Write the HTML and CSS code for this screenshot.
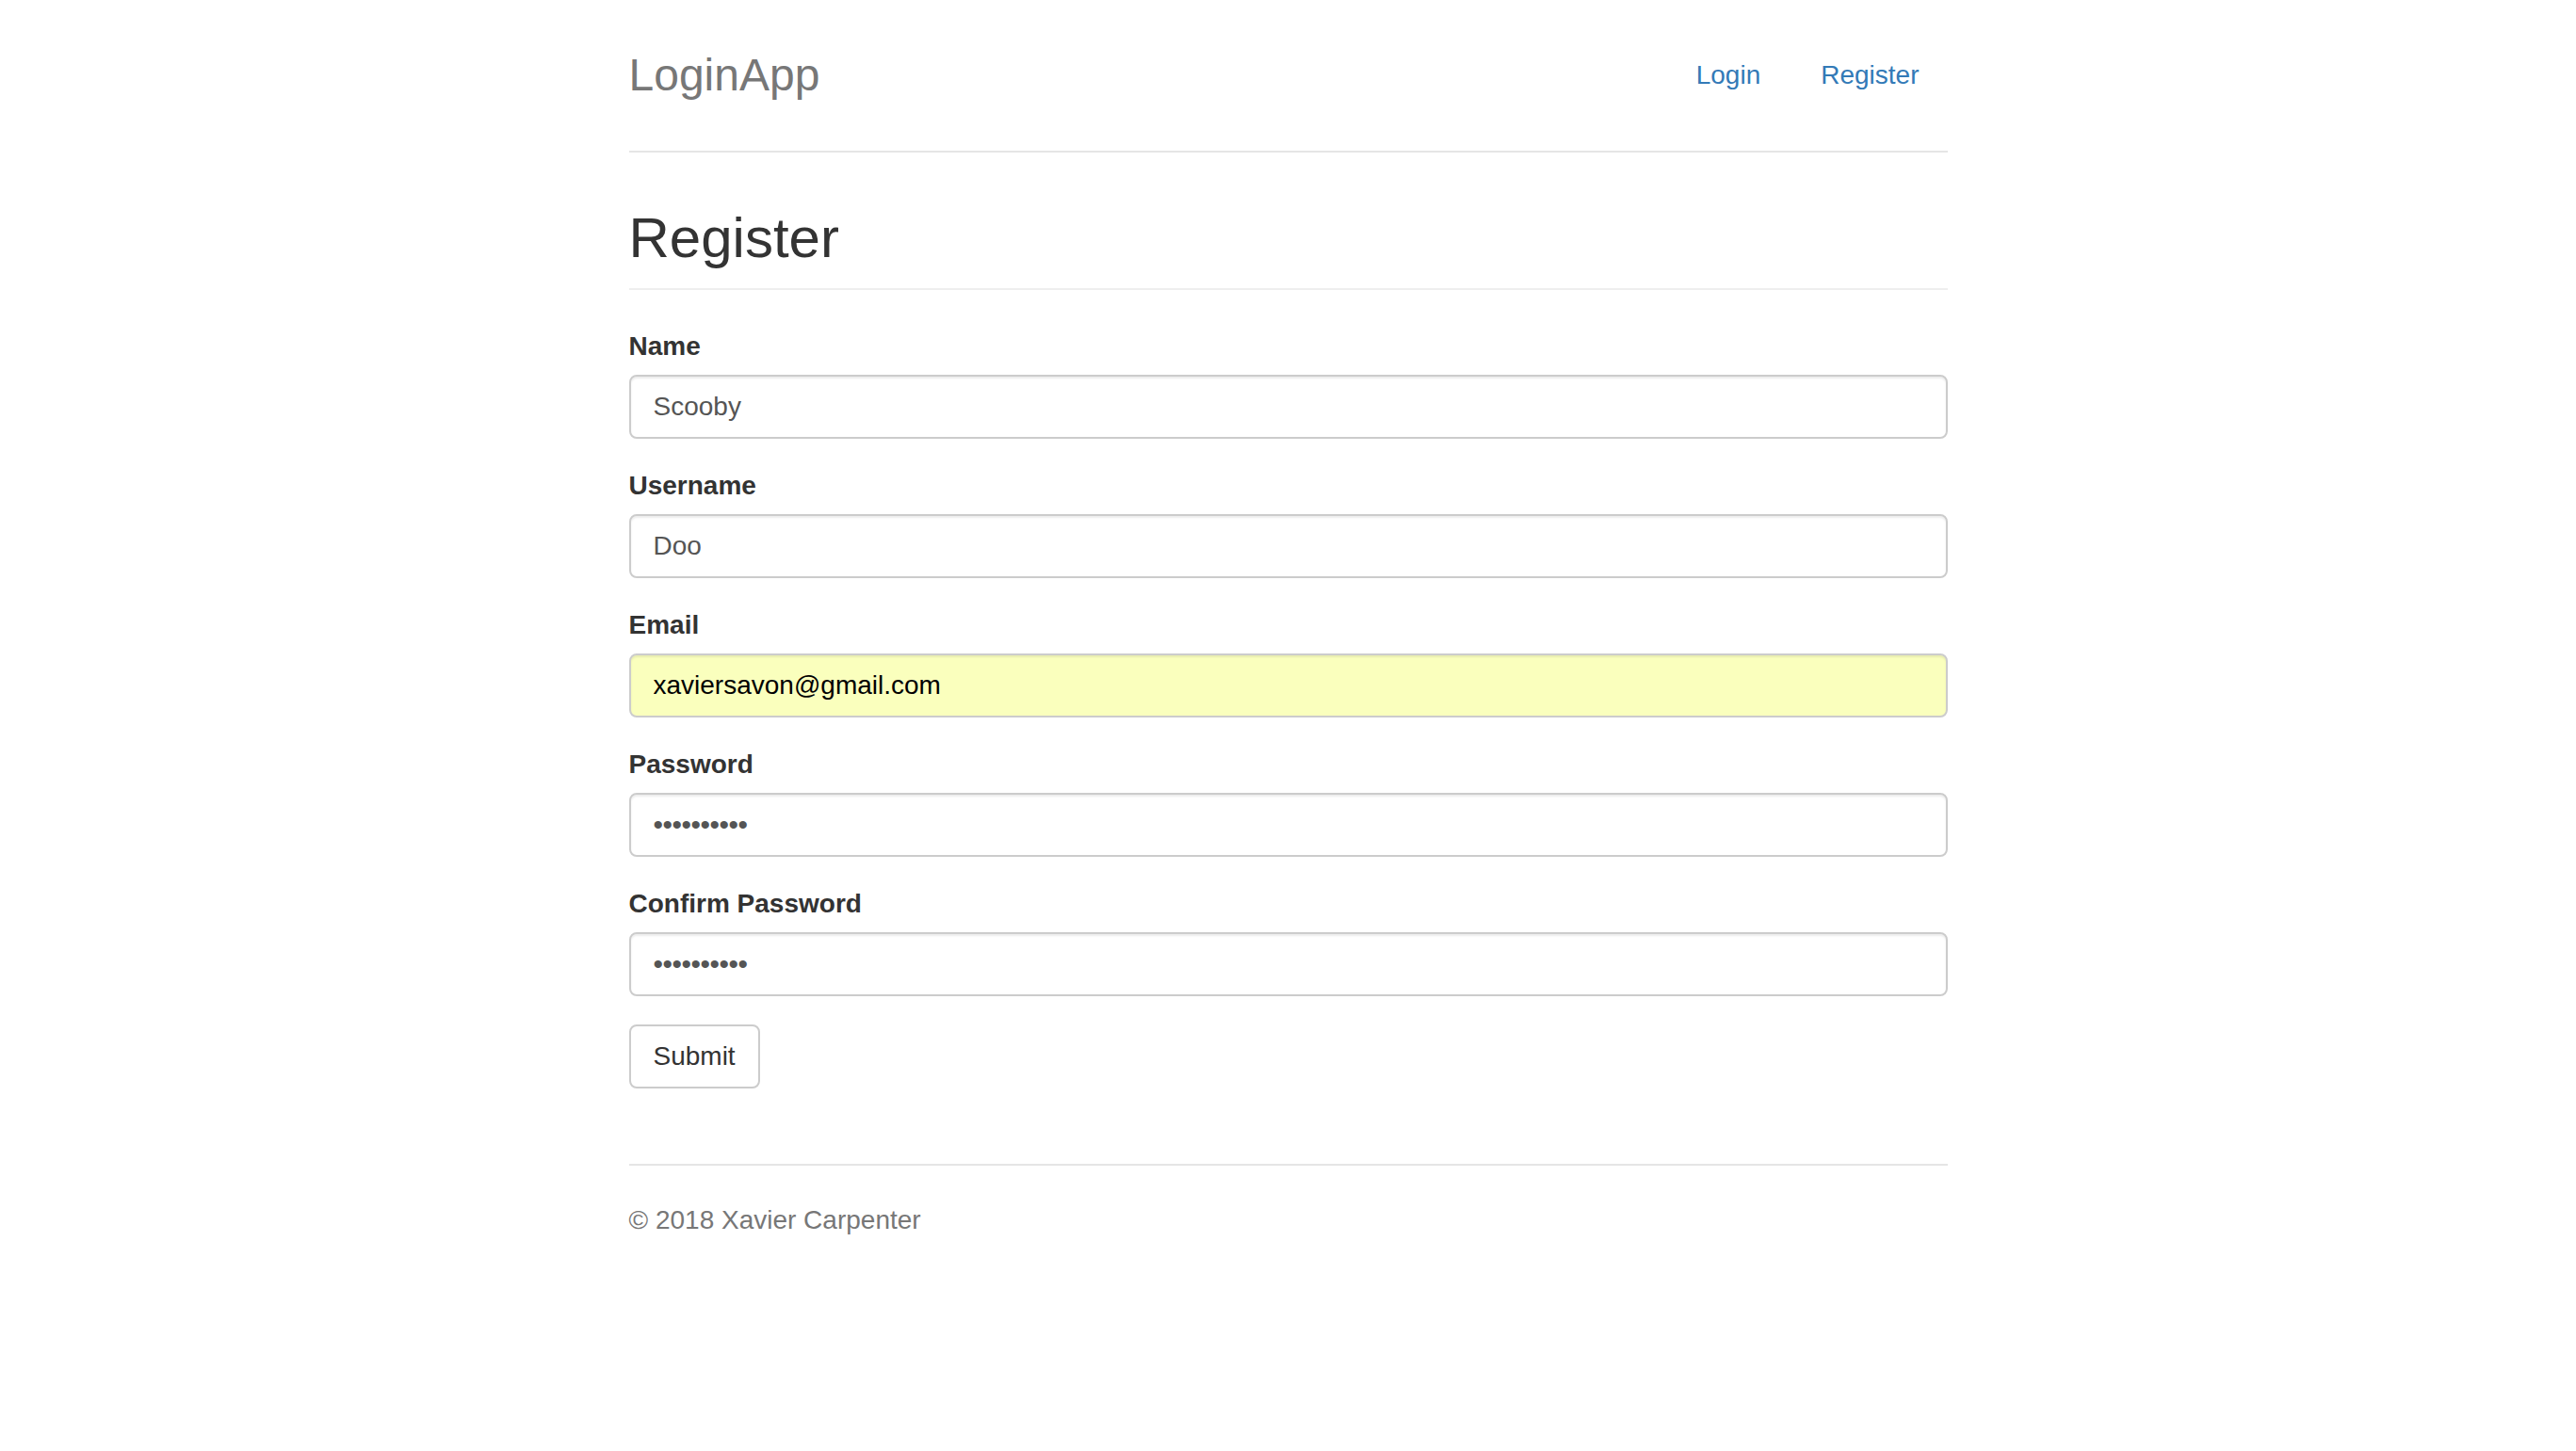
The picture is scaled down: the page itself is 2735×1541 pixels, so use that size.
FILE: index.html
```html
<!DOCTYPE html>
<html lang="en">
<head>
<meta charset="utf-8">
<title>LoginApp</title>
<link rel="stylesheet" href="styles.css">
</head>
<body>
<div class="container">
  <header class="header">
    <h3 class="brand">LoginApp</h3>
    <nav>
      <ul class="nav">
        <li><a href="#">Login</a></li>
        <li><a href="#">Register</a></li>
      </ul>
    </nav>
  </header>

  <div class="page-header">
    <h2>Register</h2>
  </div>

  <form class="form">
    <div class="form-group">
      <label for="name">Name</label>
      <input id="name" class="form-control" type="text" value="Scooby">
    </div>
    <div class="form-group">
      <label for="username">Username</label>
      <input id="username" class="form-control" type="text" value="Doo">
    </div>
    <div class="form-group">
      <label for="email">Email</label>
      <input id="email" class="form-control autofilled" type="email" value="xaviersavon@gmail.com">
    </div>
    <div class="form-group">
      <label for="password">Password</label>
      <input id="password" class="form-control password" type="password" value="1234567890">
    </div>
    <div class="form-group">
      <label for="password2">Confirm Password</label>
      <input id="password2" class="form-control password" type="password" value="1234567890">
    </div>
    <button type="submit" class="btn">Submit</button>
  </form>

  <footer class="footer">
    <p>&copy; 2018 Xavier Carpenter</p>
  </footer>
</div>
</body>
</html>
```

FILE: styles.css
```css
* {
  box-sizing: border-box;
}

html, body {
  margin: 0;
  background: #fff;
}

body {
  padding-top: 40px;
  font-family: "Liberation Sans", Arial, Helvetica, sans-serif;
  font-size: 28px;
  line-height: 40px;
  color: #333;
}

.container {
  width: 1400px;
  margin: 0 auto;
}

.header {
  display: flex;
  justify-content: space-between;
  align-items: flex-start;
  padding-bottom: 40px;
  border-bottom: 2px solid #e5e5e5;
}

.brand {
  margin: 0;
  font-size: 48px;
  line-height: 80px;
  font-weight: 500;
  color: #777;
}

.nav {
  display: flex;
  gap: 4px;
  margin: 0;
  padding: 0;
  list-style: none;
}

.nav a {
  display: block;
  padding: 20px 30px;
  line-height: 40px;
  color: #337ab7;
  text-decoration: none;
  border-radius: 8px;
}

.page-header {
  margin: 58px 0 40px;
  padding-bottom: 20px;
  border-bottom: 2px solid #eee;
}

.page-header h2 {
  margin: 0;
  font-size: 60px;
  line-height: 66px;
  font-weight: 500;
  color: #333;
}

.form-group {
  margin-bottom: 30px;
}

.form-group label {
  display: block;
  margin-bottom: 10px;
  font-weight: bold;
  line-height: 40px;
}

.form-control {
  display: block;
  width: 100%;
  height: 68px;
  padding: 12px 24px;
  font-family: inherit;
  font-size: 28px;
  line-height: 40px;
  color: #555;
  background: #fff;
  border: 2px solid #ccc;
  border-radius: 8px;
  box-shadow: inset 0 2px 2px rgba(0, 0, 0, 0.075);
  outline: none;
}

.form-control.autofilled {
  background: #faffbd;
  color: #000;
}

.form-control.password {
  font-size: 30px;
  letter-spacing: -0.5px;
}

.btn {
  display: inline-block;
  height: 68px;
  padding: 12px 24px;
  font-family: inherit;
  font-size: 28px;
  line-height: 40px;
  color: #333;
  background: #fff;
  border: 2px solid #ccc;
  border-radius: 8px;
  cursor: pointer;
}

.footer {
  margin-top: 80px;
  padding-top: 38px;
  border-top: 2px solid #e5e5e5;
  color: #777;
}

.footer p {
  margin: 0 0 20px;
}
```
